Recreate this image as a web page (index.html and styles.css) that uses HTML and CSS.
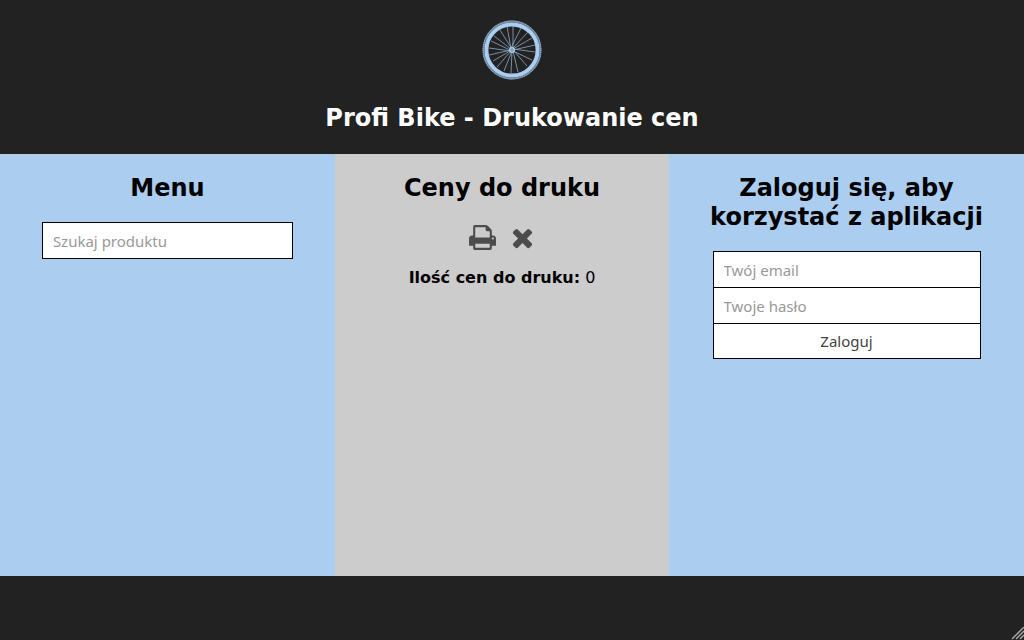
FILE: index.html
```html
<!DOCTYPE html>
<html lang="pl">
<head>
<meta charset="utf-8">
<meta name="viewport" content="width=device-width, initial-scale=1">
<title>Profi Bike - Drukowanie cen</title>
<link rel="stylesheet" href="styles.css">
</head>
<body>
<header class="header">
  <svg class="logo" viewBox="0 0 60 60" aria-hidden="true">
    <circle class="tyre" cx="30" cy="30" r="28.5"/>
    <circle class="tread" cx="30" cy="30" r="29"/>
    <circle class="rim" cx="30" cy="30" r="25.6"/>
    <path class="spokes" d="M29 29L25 6M31 29L31 6M29 28L39 8M31 28L46 12M31 29L50 18M31 30L53 25M31 29L53 32M31 31L50 40M32 31L45 46M31 31L36 52M30 31L29 53M30 31L22 51M29 31L15 47M28 31L11 41M29 30L7 35M29 31L7 28M28 30L9 21M29 29L12 16M30 29L18 10"/>
    <circle class="hub" cx="30" cy="30" r="3"/>
    <circle class="axle" cx="30" cy="30" r="1.3"/>
  </svg>
  <h1 class="title">Profi Bike - Drukowanie cen</h1>
</header>
<main class="columns">
  <section class="column">
    <h2 class="heading">Menu</h2>
    <input class="field search" type="search" placeholder="Szukaj produktu" aria-label="Szukaj produktu">
  </section>
  <section class="column column-print">
    <h2 class="heading">Ceny do druku</h2>
    <div class="actions">
      <button class="icon-button" type="button" aria-label="Drukuj">
        <svg class="icon" viewBox="0 0 1792 1792" aria-hidden="true"><path d="M448 1536h896v-256h-896v256zm0-640h896v-384h-160q-40 0-68-28t-28-68v-160h-640v640zm1152 64q0-26-19-45t-45-19-45 19-19 45 19 45 45 19 45-19 19-45zm128 0v416q0 13-9.5 22.5t-22.5 9.5h-224v160q0 40-28 68t-68 28h-960q-40 0-68-28t-28-68v-160h-224q-13 0-22.5-9.5t-9.5-22.5v-416q0-79 56.5-135.5t135.5-56.5h64v-544q0-40 28-68t68-28h672q40 0 88 20t76 48l152 152q28 28 48 76t20 88v256h64q79 0 135.5 56.5t56.5 135.5z"/></svg>
      </button>
      <button class="icon-button" type="button" aria-label="Wyczyść">
        <svg class="icon" viewBox="0 0 1792 1792" aria-hidden="true"><path d="M1490 1322q0 40-28 68l-136 136q-28 28-68 28t-68-28l-294-294-294 294q-28 28-68 28t-68-28l-136-136q-28-28-28-68t28-68l294-294-294-294q-28-28-28-68t28-68l136-136q28-28 68-28t68 28l294 294 294-294q28-28 68-28t68 28l136 136q28 28 28 68t-28 68l-294 294 294 294q28 28 28 68z"/></svg>
      </button>
    </div>
    <p class="count"><strong>Ilość cen do druku:</strong> 0</p>
  </section>
  <section class="column">
    <h2 class="heading">Zaloguj się, aby korzystać z aplikacji</h2>
    <form class="login">
      <input class="field" type="email" placeholder="Twój email" aria-label="Twój email">
      <input class="field" type="password" placeholder="Twoje hasło" aria-label="Twoje hasło">
      <button class="field submit" type="submit">Zaloguj</button>
    </form>
  </section>
</main>
<footer class="footer">
  <svg class="grip" viewBox="0 0 13 13" aria-hidden="true"><path d="M1 12L13 0M5 12L13 4M9 12L13 8"/></svg>
</footer>
</body>
</html>
```
FILE: styles.css
```css
* {
  box-sizing: border-box;
}

body {
  display: flex;
  flex-direction: column;
  min-height: 100vh;
  margin: 0;
  background: #222;
  color: #000;
  font-family: "DejaVu Sans", sans-serif;
  font-size: 16px;
  line-height: 20px;
}

.header {
  display: flex;
  flex-direction: column;
  align-items: center;
  gap: 24px;
  padding: 20px 20px 21px;
  color: #fff;
}

.logo {
  width: 60px;
  height: 60px;
  fill: none;
  stroke: #abcdef;
}

.tyre {
  stroke: #6d859b;
  stroke-width: 2;
}

.tread {
  stroke: #a1bdd9;
  stroke-width: 1;
  stroke-dasharray: 1 1;
}

.rim {
  stroke-width: 4;
}

.spokes {
  stroke: #9dbcdb;
  stroke-width: 0.7;
}

.hub {
  fill: #abcdef;
  stroke: none;
}

.axle {
  stroke: #55687b;
  stroke-width: 0.6;
}

.title,
.heading {
  margin: 0;
  font-size: 24px;
  line-height: 29px;
  text-align: center;
}

.columns {
  display: grid;
  flex: 1;
  grid-template-columns: 335fr 334fr 355fr;
}

.column {
  display: flex;
  flex-direction: column;
  align-items: center;
  gap: 19px;
  padding: 20px 0;
  background: #abcdef;
}

.column-print {
  gap: 20px;
  background: #ccc;
}

.heading {
  max-width: 300px;
}

.field {
  width: 100%;
  height: 37px;
  margin: 0;
  padding: 0 10px;
  border: 1px solid #000;
  border-radius: 0;
  background: #fff;
  color: #444;
  font-family: "Noto Sans", sans-serif;
  font-size: 15px;
  appearance: none;
}

.field::placeholder {
  color: #999;
  opacity: 1;
}

.search {
  width: 75%;
}

.login {
  display: flex;
  flex-direction: column;
  width: 268px;
  max-width: 100%;
}

.login .field + .field {
  margin-top: -1px;
}

.submit {
  height: 36px;
  cursor: pointer;
}

.actions {
  display: flex;
  gap: 11px;
}

.icon-button {
  display: flex;
  padding: 0;
  border: 0;
  background: none;
  cursor: pointer;
}

.icon {
  width: 29px;
  height: 29px;
  fill: #4c4c4c;
}

.count {
  margin: -4px 0 0;
}

.footer {
  position: relative;
  height: 64px;
}

.grip {
  position: absolute;
  right: 0;
  bottom: 0;
  width: 13px;
  height: 13px;
  fill: none;
  stroke: #aaa;
  stroke-width: 1.4;
}
```
